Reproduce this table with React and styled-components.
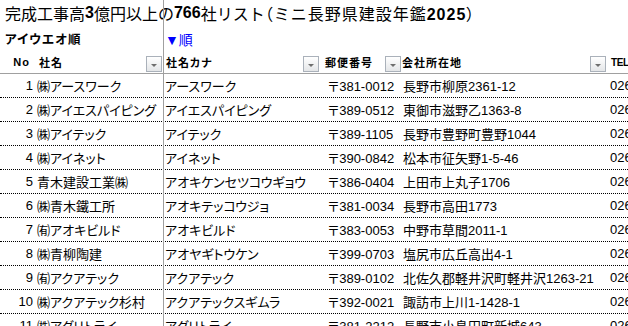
import React from "react";
import styled, { createGlobalStyle } from "styled-components";

const GlobalStyle = createGlobalStyle`
  html, body { margin: 0; padding: 0; background: #fff; overflow: hidden; }
  body {
    font-family: "Liberation Sans", "Noto Sans CJK JP", sans-serif;
    font-feature-settings: "palt";
    color: #000;
  }
`;

const COLS = "34px 129px 157px 82px 205px 1fr";

const Sheet = styled.div`
  position: relative;
  width: 628px;
  height: 326px;
  overflow: hidden;
`;

const FreezeLine = styled.div`
  position: absolute;
  top: 0;
  bottom: 0;
  left: 163px;
  width: 1px;
  background: #a0a0a0;
`;

const TitleRow = styled.div`
  height: 26px;
  display: flex;
  align-items: center;
  padding-left: 5px;
  font-size: 16px;
  font-feature-settings: normal;
  white-space: nowrap;
`;

const Subtitle = styled.span`
  letter-spacing: 1px;
`;

const Paren = styled.span`
  font-feature-settings: "palt";
`;

const Num = styled.span`
  font-weight: 700;
`;

const Grid = styled.div`
  display: grid;
  grid-template-columns: ${COLS};
  box-sizing: border-box;
  height: ${(p) => p.$h}px;
  border-bottom: ${(p) => p.$line || "none"};
`;

const SortLabel = styled.div`
  grid-column: 1 / span 2;
  display: flex;
  align-items: center;
  padding-left: 5px;
  font-size: 12.5px;
  font-weight: 700;
  letter-spacing: 1px;
`;

const SortLink = styled.div`
  grid-column: 3;
  display: flex;
  align-items: center;
  padding-left: 2px;
  font-size: 14px;
  color: #0000ff;
`;

const HeadCell = styled.div`
  display: flex;
  align-items: center;
  justify-content: ${(p) => (p.$right ? "flex-end" : "space-between")};
  padding-left: ${(p) => p.$pl || 0}px;
  padding-right: ${(p) => (p.$right ? 4 : 1)}px;
  font-size: 11px;
  font-weight: 700;
  letter-spacing: 1px;
  white-space: nowrap;
  overflow: hidden;
`;

const TelHead = styled.div`
  display: flex;
  align-items: center;
  padding-left: 4px;
  font-size: 10px;
  font-weight: 700;
  letter-spacing: -0.4px;
  white-space: nowrap;
`;

const FilterButton = styled.span`
  flex: none;
  align-self: flex-end;
  margin-bottom: 1px;
  width: 16px;
  height: 16px;
  box-sizing: border-box;
  border: 1px solid #aab1ba;
  background: linear-gradient(#ffffff, #e4e6e8);
  display: flex;
  align-items: center;
  justify-content: center;
  &::after {
    content: "";
    margin-top: 2px;
    border-left: 3px solid transparent;
    border-right: 3px solid transparent;
    border-top: 3px solid #6e6e6e;
  }
`;

const Cell = styled.div`
  display: flex;
  align-items: center;
  justify-content: ${(p) => (p.$right ? "flex-end" : "flex-start")};
  padding-left: ${(p) => p.$pl || 0}px;
  padding-right: ${(p) => p.$pr || 0}px;
  font-size: 13px;
  white-space: nowrap;
  overflow: hidden;
`;

const rows = [
  ["1", "㈱アースワーク", "アースワーク", "〒381-0012", "長野市柳原2361-12", "026"],
  ["2", "㈱アイエスパイピング", "アイエスパイピング", "〒389-0512", "東御市滋野乙1363-8", "026"],
  ["3", "㈱アイテック", "アイテック", "〒389-1105", "長野市豊野町豊野1044", "026"],
  ["4", "㈱アイネット", "アイネット", "〒390-0842", "松本市征矢野1-5-46", "026"],
  ["5", "青木建設工業㈱", "アオキケンセツコウギョウ", "〒386-0404", "上田市上丸子1706", "026"],
  ["6", "㈱青木鐵工所", "アオキテッコウジョ", "〒381-0034", "長野市高田1773", "026"],
  ["7", "㈲アオキビルド", "アオキビルド", "〒383-0053", "中野市草間2011-1", "026"],
  ["8", "㈱青柳陶建", "アオヤギトウケン", "〒399-0703", "塩尻市広丘高出4-1", "026"],
  ["9", "㈲アクアテック", "アクアテック", "〒389-0102", "北佐久郡軽井沢町軽井沢1263-21", "026"],
  ["10", "㈱アクアテック杉村", "アクアテックスギムラ", "〒392-0021", "諏訪市上川1-1428-1", "026"],
  ["11", "㈱アグリトライ", "アグリトライ", "〒381-2212", "長野市小島田町新城643", "026"],
];

export default function App() {
  return (
    <>
      <GlobalStyle />
      <Sheet>
        <TitleRow>
          完成工事高<Num>3</Num>億円以上の<Num>766</Num>社リスト
          <Subtitle>
            <Paren>（</Paren>ミニ長野県建設年鑑<Num>2025</Num><Paren>）</Paren>
          </Subtitle>
        </TitleRow>
        <Grid $h={25}>
          <SortLabel>アイウエオ順</SortLabel>
          <SortLink>▼順</SortLink>
        </Grid>
        <Grid $h={23} $line="1px solid #a0a0a0">
          <HeadCell $right>No</HeadCell>
          <HeadCell $pl={5}>
            社名
            <FilterButton />
          </HeadCell>
          <HeadCell $pl={3}>
            社名カナ
            <FilterButton />
          </HeadCell>
          <HeadCell $pl={5}>
            郵便番号
            <FilterButton />
          </HeadCell>
          <HeadCell $pl={0}>
            会社所在地
            <FilterButton />
          </HeadCell>
          <TelHead>TEL</TelHead>
        </Grid>
        {rows.map((r) => (
          <Grid key={r[0]} $h={24} $line="1px dotted #000">
            <Cell $right $pr={1}>{r[0]}</Cell>
            <Cell $pl={3}>{r[1]}</Cell>
            <Cell $pl={2}>{r[2]}</Cell>
            <Cell $pl={8}>{r[3]}</Cell>
            <Cell $pl={1}>{r[4]}</Cell>
            <Cell $pl={3}>{r[5]}</Cell>
          </Grid>
        ))}
        <FreezeLine />
      </Sheet>
    </>
  );
}
